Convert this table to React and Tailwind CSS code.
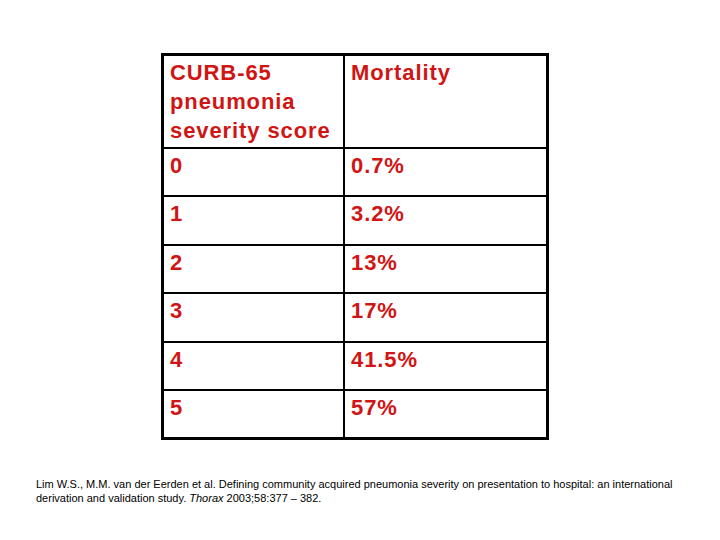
const rows = [
  ["0", "0.7%"],
  ["1", "3.2%"],
  ["2", "13%"],
  ["3", "17%"],
  ["4", "41.5%"],
  ["5", "57%"],
];

export default function App() {
  return (
    <div className="h-[540px] w-[720px] bg-white">
      <div className="pl-[161px] pt-[53px]">
        <div className="w-[388px] border-[3px] border-black font-['Liberation_Sans',Arial,sans-serif] text-[22px] leading-[29px] font-bold tracking-[0.9px] text-[#d01515]">
          <div className="grid h-[91px] grid-cols-[181px_1fr]">
            <div className="border-r-2 border-black px-[6px] pt-[2px]">
              CURB-65 pneumonia severity score
            </div>
            <div className="px-[6px] pt-[2px]">Mortality</div>
          </div>
          {rows.map(([score, mort]) => (
            <div
              key={score}
              className="grid h-[48.4px] grid-cols-[181px_1fr] border-t-2 border-black"
            >
              <div className="border-r-2 border-black px-[6px] pt-[2px]">{score}</div>
              <div className="px-[6px] pt-[2px]">{mort}</div>
            </div>
          ))}
        </div>
      </div>
      <p className="mt-[37px] w-[700px] pl-[36px] font-['Liberation_Sans',Arial,sans-serif] text-[11px] leading-[14px] text-black">
        Lim W.S., M.M. van der Eerden et al. Defining community acquired pneumonia severity on presentation to hospital: an international
        <br />
        derivation and validation study. <i>Thorax</i> 2003;58:377 – 382.
      </p>
    </div>
  );
}
